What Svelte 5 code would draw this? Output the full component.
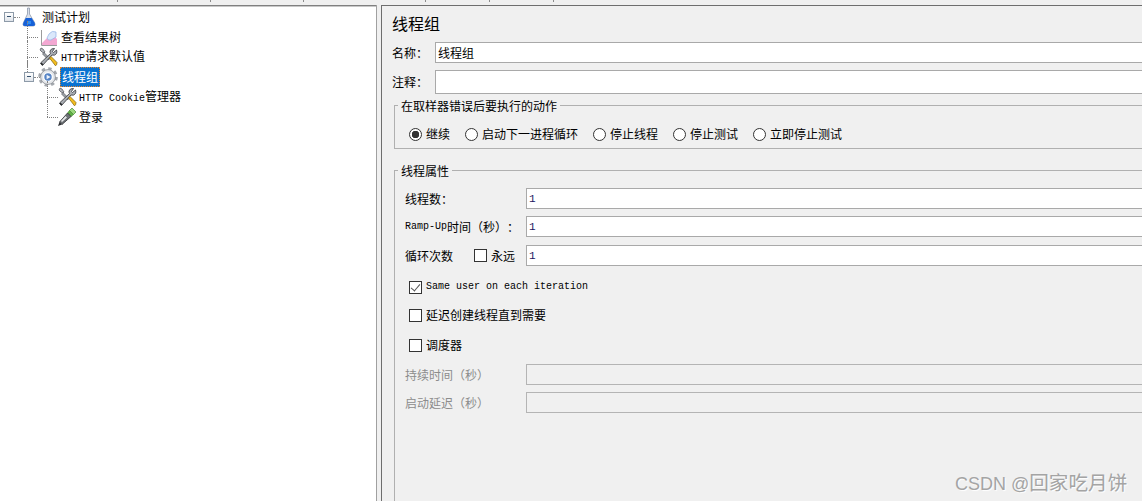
<script>
  const radios = [
    { label: '继续', on: true },
    { label: '启动下一进程循环' },
    { label: '停止线程' },
    { label: '停止测试' },
    { label: '立即停止测试' }
  ]
  const ticks = [117, 210, 303, 425, 489, 553]
</script>

{#snippet tools()}
  <svg class="icon" width="20" height="20" viewBox="0 0 20 20">
    <path d="M2 3 L3 1 L5 2 L7 5 L6 6 L4 5 Z" fill="#b4b8bd" stroke="#4a4e54" stroke-width=".7" />
    <path d="M6 5.5 L12 11.5 L10.5 13 L4.5 7 Z" fill="#9ca1a7" stroke="#4a4e54" stroke-width=".6" />
    <path d="M18.5 3 L15.5 5.5 L14.5 4.5 L16.5 1.5 Q13 1 12 4 Q12 6 12.5 6.5 L2.5 16 L4.5 18.5 L14 8 Q17 9 18.5 6.5 Q19.2 5 18.5 3 Z" fill="#a9adb3" stroke="#33363a" stroke-width=".8" />
    <path d="M11.5 11 L13 9.5 L19 15.5 Q19 18 17.5 18.8 Z" fill="#f3bd1e" stroke="#7d5f08" stroke-width=".7" />
    <path d="M3.5 15.5 L5.5 17.5 L4 18.6 L2.4 16.6 Z" fill="#2b2d30" />
  </svg>
{/snippet}

<div class="page">
  <div class="topbar">
    {#each ticks as x}<i class="tick" style="left:{x}px"></i>{/each}
  </div>
  <div class="split">
    <div class="tree">
      <div class="row r0">
        <span class="box"></span>
        <svg class="icon flask" width="16" height="20" viewBox="0 0 16 20">
          <path d="M6.5 1 H8.5 V7 L13.5 15.5 Q15 19 12 19 H4 Q1 19 2.5 15.5 L6.5 7 Z" fill="#d8deea" stroke="#8e99ab" stroke-width=".8" />
          <path d="M4.8 11 H10.6 L13.5 15.5 Q15 19 12 19 H4 Q1 19 2.5 15.5 Z" fill="#1560d8" />
          <path d="M6 14 h4 v3 h-4 Z" fill="#2f8cf0" />
        </svg>
        <span class="text t0">测试计划</span>
      </div>
      <div class="row r1 conn">
        <svg class="icon graph" width="19" height="20" viewBox="0 0 19 20">
          <path d="M2.5 3 V18.5 H18" fill="none" stroke="#9c9c9c" />
          <path d="M3 18 V16 L8 11 L11 13 L15 9 L18 12 V18 Z" fill="#f3a8d2" />
          <path d="M8 11 L10 7 Q13 3 17 5 L17 10 L12 13 Q9 14 8 11 Z" fill="#dbe8fb" stroke="#8fb0e4" stroke-width=".7" />
        </svg>
        <span class="text">查看结果树</span>
      </div>
      <div class="row r1t conn">
        {@render tools()}
        <span class="text"><span class="lat">HTTP</span>请求默认值</span>
      </div>
      <div class="row r1b conn short">
        <span class="box"></span>
        <svg class="icon gear" width="20" height="20" viewBox="0 0 20 20">
          <circle cx="10" cy="10" r="8" fill="none" stroke="#a4a8ae" stroke-width="3.6" stroke-dasharray="3.2 3.08" />
          <circle cx="10" cy="10" r="7.4" fill="#e4e6e9" stroke="#858a91" stroke-width=".8" />
          <circle cx="10" cy="10" r="4.4" fill="#5583c4" stroke="#fafbfc" stroke-width="1.4" />
          <path d="M8.6 7.8 L12.6 10 L8.6 12.2 Z" fill="#eef3fb" />
        </svg>
        <span class="text sel">线程组</span>
      </div>
      <div class="row r2 conn2">
        {@render tools()}
        <span class="text tool2"><span class="lat">HTTP Cookie</span>管理器</span>
      </div>
      <div class="row r2 conn2 short">
        <svg class="icon" width="20" height="20" viewBox="0 0 20 20">
          <path d="M12.5 3.5 L16.5 7.5 L14 9.5 L10.5 6 Z" fill="#5fb244" stroke="#3a7a28" stroke-width=".6" />
          <path d="M15 1 L19 5 L16.5 7.5 L12.5 3.5 Z" fill="#9ad87c" stroke="#3a7a28" stroke-width=".6" />
          <path d="M10.5 6 L14 9.5 L5 17.5 L2.5 15 Z" fill="#6e7276" stroke="#2c2e31" stroke-width=".8" />
          <path d="M8.5 9 L10 10.5 L5 15 L4 14 Z" fill="#e6e8ea" />
          <path d="M2.5 15 L5 17.5 L1 19 Z" fill="#2c2e31" />
        </svg>
        <span class="text tool2">登录</span>
      </div>
    </div>

    <div class="divider"></div>

    <div class="panel">
      <div class="title">线程组</div>
      <div class="field name">
        <label for="tg-name">名称：</label>
        <input id="tg-name" class="cn" value="线程组" />
      </div>
      <div class="field comment">
        <label for="tg-comment">注释：</label>
        <input id="tg-comment" class="cn" />
      </div>

      <fieldset class="onerror">
        <legend>在取样器错误后要执行的动作</legend>
        <div class="radios">
          {#each radios as r}
            <label class="radio"><input type="radio" name="action" checked={r.on} />{r.label}</label>
          {/each}
        </div>
      </fieldset>

      <fieldset class="props">
        <legend>线程属性</legend>
        <div class="prop first">
          <span class="plabel">线程数：</span>
          <input class="num" value="1" />
        </div>
        <div class="prop">
          <span class="plabel"><span class="lat">Ramp-Up</span>时间（秒）：</span>
          <input class="num" value="1" />
        </div>
        <div class="prop third">
          <span class="plabel">循环次数
            <label class="check inline"><input type="checkbox" />永远</label>
          </span>
          <input class="num" value="1" />
        </div>
        <label class="check line same"><input type="checkbox" checked /><span class="lat">Same user on each iteration</span></label>
        <label class="check line delay">
          <input type="checkbox" />延迟创建线程直到需要
        </label>
        <label class="check line">
          <input type="checkbox" />调度器
        </label>
        <div class="prop off d1">
          <span class="plabel">持续时间（秒）</span>
          <input class="num" disabled />
        </div>
        <div class="prop off">
          <span class="plabel">启动延迟（秒）</span>
          <input class="num" disabled />
        </div>
      </fieldset>
    </div>
  </div>
  <div class="mark">CSDN @<span class="mark-cn">回家吃月饼</span></div>
</div>

<style>
  :global(body) { margin: 0; overflow: hidden; background: #f0f0f0; }
  .page {
    position: relative;
    width: 1142px;
    height: 501px;
    overflow: hidden;
    background: #f0f0f0;
    color: #000;
    font: 12px/16px "Noto Sans CJK SC", "Liberation Sans", sans-serif;
    text-spacing-trim: space-all;
  }
  .topbar { position: relative; height: 5px; background: #f0f0f0; }
  .tick { position: absolute; top: 0; width: 1px; height: 2px; background: #8c8c8c; }
  .split { display: flex; height: 496px; }

  .tree {
    width: 376px;
    flex: none;
    box-sizing: border-box;
    background: #fff;
    border-top: 1px solid #808080;
    box-shadow: inset 0 1px 0 #c8c8c8;
    padding-top: 1px;
  }
  .row { position: relative; display: flex; align-items: center; height: 20px; }
  .r0 { padding-left: 21px; }
  .r1 { padding-left: 39px; }
  .r1t { padding-left: 38px; }
  .r1b { padding-left: 38px; }
  .r2 { padding-left: 57px; }
  .icon { flex: none; }
  .text { margin-left: 3px; white-space: nowrap; }
  .t0 { margin-left: 5px; }
  .tool2 { margin-left: 2px; }
  .lat { font: 10px/16px "Liberation Mono", monospace; }
  .sel {
    margin-left: 2px;
    width: 38px;
    height: 18px;
    line-height: 18px;
    background: #0a72d0;
    color: #fff;
    border: 1px dotted #e8872c;
    text-align: center;
  }
  .box {
    position: absolute;
    top: 5px;
    width: 8px;
    height: 8px;
    border: 1px solid #8d9aa8;
    background: linear-gradient(#fff, #dfe4ea);
  }
  .box::after {
    content: "";
    position: absolute;
    left: 2px;
    top: 3px;
    width: 4px;
    height: 1px;
    background: #34506e;
  }
  .r0 .box { left: 4px; }
  .r1b .box { left: 24px; }
  .r0 .box::before, .r1b .box::before {
    content: "";
    position: absolute;
    left: 9px;
    top: 4px;
    width: 6px;
    border-top: 1px dotted #888;
  }
  .conn::before, .conn2::before {
    content: "";
    position: absolute;
    top: -6px;
    bottom: 0;
    left: 27px;
    border-left: 1px dotted #808080;
  }
  .conn::after, .conn2::after {
    content: "";
    position: absolute;
    top: 10px;
    left: 27px;
    width: 11px;
    border-top: 1px dotted #808080;
  }
  .conn2::before, .conn2::after { left: 47px; }
  .short::before { bottom: 10px; }
  .r1b.short::before { bottom: 15px; }
  .r1b.short::after { display: none; }

  .divider {
    width: 5px;
    flex: none;
    border-left: 1px solid #a0a0a0;
    box-sizing: border-box;
  }
  .panel {
    flex: none;
    width: 790px;
    box-sizing: border-box;
    border-left: 1px solid #6e6e6e;
    border-top: 1px solid #6e6e6e;
    padding-left: 10px;
  }
  .title { font-size: 16px; line-height: 20px; margin-top: 7px; }
  .field { display: flex; align-items: center; }
  .field label { width: 43px; flex: none; }
  .field.name { margin-top: 9px; height: 21px; }
  .field.comment { margin-top: 7px; height: 24px; }
  input:not([type]) {
    box-sizing: border-box;
    border: 1px solid #a9a9a9;
    background: #fff;
    margin: 0;
    padding: 0 2px;
    outline: none;
    border-radius: 0;
  }
  .cn { flex: 1; height: 100%; font: 12px "Noto Sans CJK SC", sans-serif; padding-left: 1px; }
  fieldset {
    border: 1px solid #b0b0b0;
    padding: 0;
    margin: 0;
    min-width: 0;
  }
  legend {
    margin-left: 3px;
    padding: 0 3px;
    line-height: 13px;
  }
  .onerror { margin: 5px 0 0 2px; height: 50px; box-sizing: border-box; }
  .radios { display: flex; padding: 14px 0 0 14px; gap: 15px; }
  .radio { display: flex; align-items: center; height: 16px; }
  input[type="radio"] {
    appearance: none;
    width: 13px;
    height: 13px;
    margin: 0 4px 0 0;
    border: 1px solid #333;
    border-radius: 50%;
    background: #fff;
    box-sizing: border-box;
  }
  input[type="radio"]:checked { background: radial-gradient(circle, #333 0 3.5px, #fff 4px); }
  .props { margin: 15px 0 0 2px; height: 350px; box-sizing: border-box; }
  .prop { display: flex; align-items: center; height: 21px; margin-top: 7px; padding-left: 10px; }
  .prop.first { margin-top: 11px; }
  .prop.third { margin-top: 8px; }
  .prop.d1 { margin-top: 11px; }
  .plabel { width: 121px; flex: none; white-space: nowrap; display: flex; align-items: center; }
  .num {
    flex: 1;
    height: 21px;
    font: 11px "Liberation Mono", monospace;
    color: #1c1460;
  }
  .num:disabled { background: #f0f0f0; border-color: #b4b4b4; }
  .off .plabel { color: #8c8c8c; }
  .check { display: flex; align-items: center; }
  .inline { margin-left: 21px; }
  .line { height: 16px; margin: 14px 0 0 14px; }
  .same { margin-top: 13px; }
  .delay { margin-top: 12px; }
  input[type="checkbox"] {
    appearance: none;
    width: 13px;
    height: 13px;
    margin: 0 4px 0 0;
    border: 1px solid #333;
    background: #fff;
    box-sizing: border-box;
    position: relative;
  }
  input[type="checkbox"]:checked::after {
    content: "";
    position: absolute;
    left: 3px;
    top: 0;
    width: 4px;
    height: 8px;
    border: solid #555;
    border-width: 0 1.5px 1.5px 0;
    transform: rotate(40deg);
  }
  .mark {
    position: absolute;
    left: 955px;
    top: 471px;
    font: 18px/24px "Liberation Sans", "Noto Sans CJK SC", sans-serif;
    color: #a4a4a4;
    text-shadow: 1px 1px 1px #fff;
    white-space: nowrap;
  }
  .mark-cn { font-size: 19.6px; }
</style>
